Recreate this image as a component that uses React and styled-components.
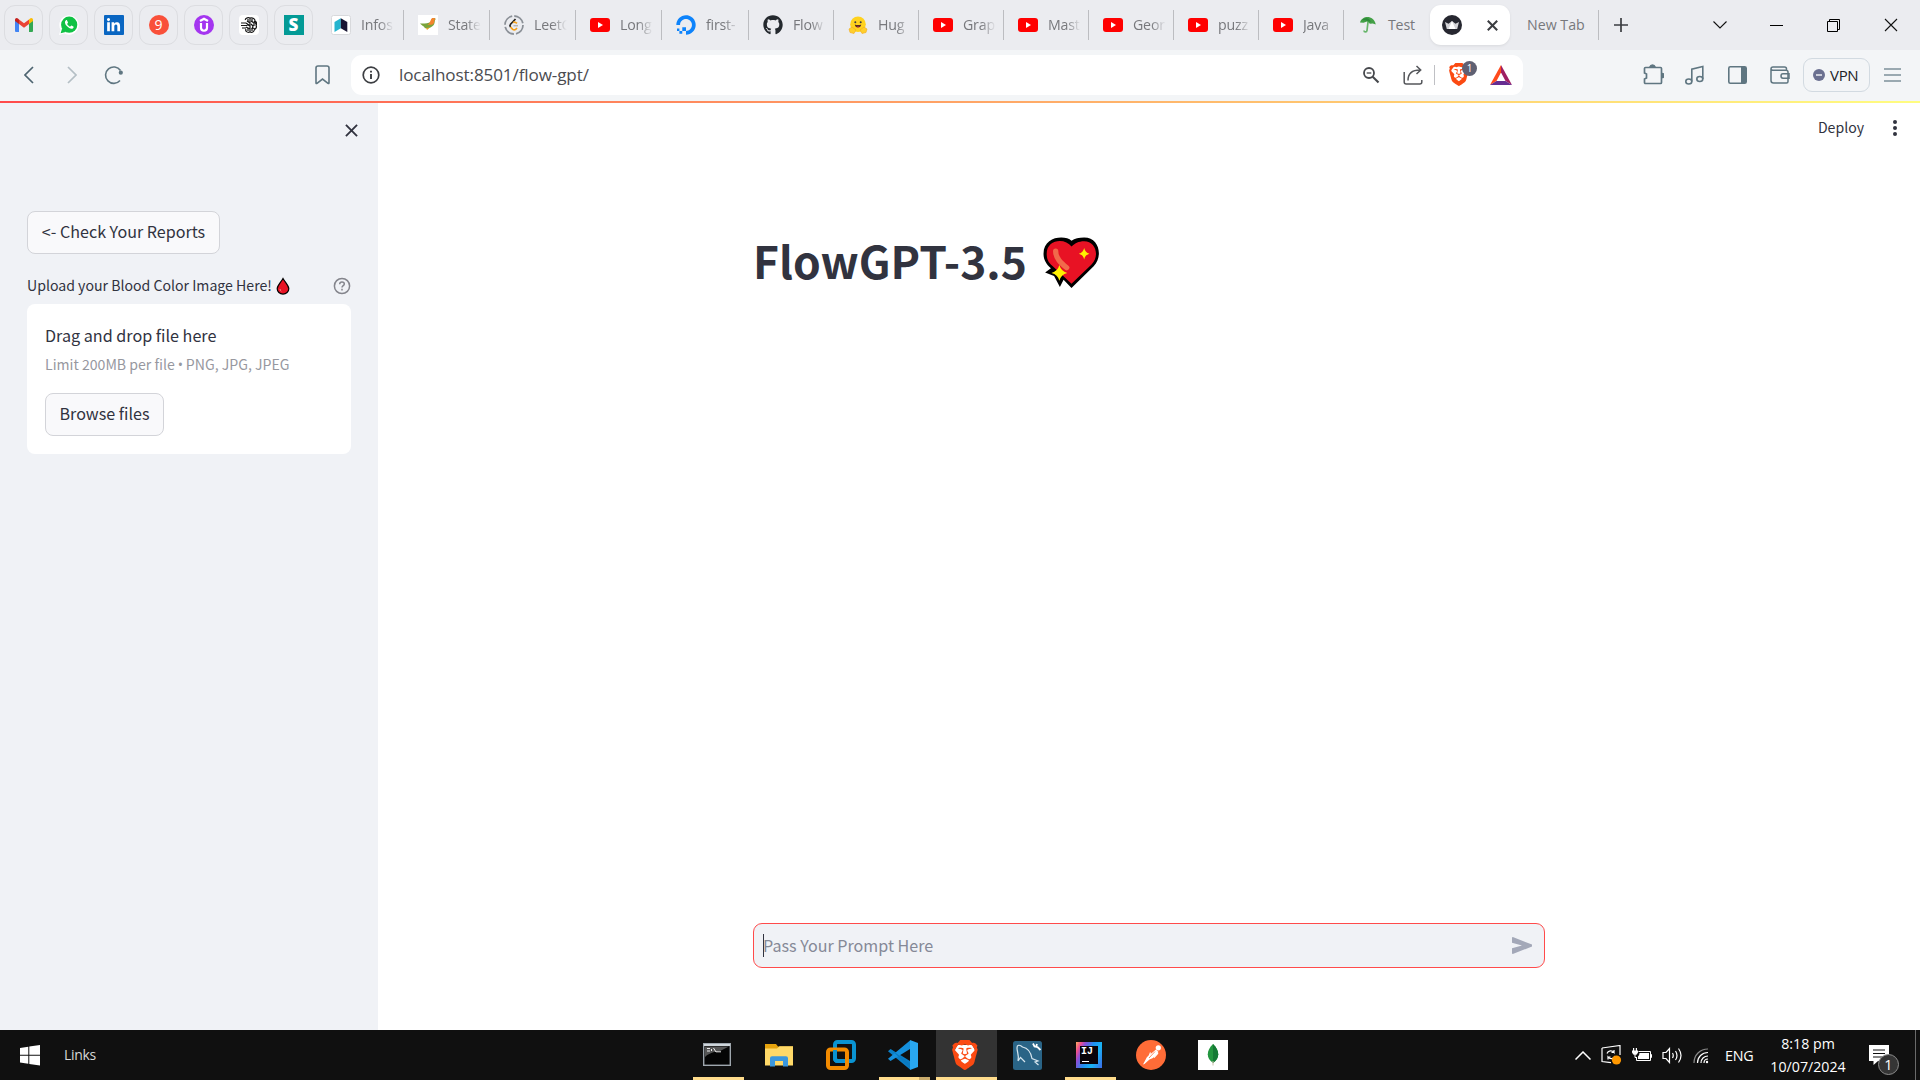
import React from "react";
import styled, { createGlobalStyle } from "styled-components";
import { FaLinkedinIn, FaGithub, FaDigitalOcean } from "react-icons/fa";
import { SiBrave } from "react-icons/si";

const UI = '"Open Sans", "Noto Sans", sans-serif';
const PAGE = '"Noto Sans CJK SC", "Noto Sans", sans-serif';

const GlobalStyle = createGlobalStyle`
  * { box-sizing: border-box; }
  body { margin: 0; overflow: hidden; background: #fff; }
  svg { display: block; flex: none; }
  button { font: inherit; margin: 0; padding: 0; border: 0; background: none; color: inherit; }
`;

const Screen = styled.div`
  width: 1920px;
  height: 1080px;
  display: flex;
  flex-direction: column;
  font-family: ${UI};
`;

/* ---------- tab strip ---------- */
const TabStrip = styled.header`
  height: 50px;
  flex: none;
  display: flex;
  align-items: center;
  background: #ebecf0;
`;
const PinnedTabs = styled.div`
  display: flex;
  gap: 6px;
  padding-left: 4px;
  margin-right: 4px;
`;
const PinnedTab = styled.div`
  width: 39px;
  height: 40px;
  border: 1px solid #dcdde1;
  border-radius: 11px;
  display: flex;
  align-items: center;
  justify-content: center;
`;
const Tab = styled.div`
  width: ${(p) => p.$width}px;
  height: 30px;
  flex: none;
  display: flex;
  align-items: center;
  gap: 10px;
  padding: 0 2px 0 14px;
  border-right: 1px solid ${(p) => (p.$last ? "transparent" : "#bcbdc1")};
`;
const TabTitle = styled.span`
  flex: 1;
  white-space: nowrap;
  font-size: 14.2px;
  line-height: 22px;
  letter-spacing: -0.2px;
  color: #77787c;
  padding-bottom: 1px;
  mask-image: ${(p) => (p.$whole ? "none" : "linear-gradient(90deg, #000 18px, transparent 33px)")};
`;
const ActiveTab = styled.div`
  width: 80px;
  height: 40px;
  border-radius: 11px;
  background: #fff;
  box-shadow: 0 1px 3px rgba(0, 0, 0, 0.08);
  display: flex;
  align-items: center;
  justify-content: space-between;
  padding: 0 12px;
`;
const NewTab = styled.div`
  width: 89px;
  height: 30px;
  border-right: 1px solid #bcbdc1;
  display: flex;
  align-items: center;
  padding: 0 0 1px 17px;
  font-size: 14.2px;
  color: #77787c;
  white-space: nowrap;
`;
const AddTab = styled.button`
  width: 44px;
  display: flex;
  justify-content: center;
`;
const WindowControls = styled.div`
  display: flex;
  margin-left: auto;
  width: 229px;
`;
const WindowButton = styled.button`
  width: 57px;
  height: 49px;
  display: flex;
  align-items: center;
  justify-content: center;
`;
const RoundBadge = styled.div`
  width: 20px;
  height: 20px;
  border-radius: ${(p) => p.$radius || "50%"};
  background: ${(p) => p.$bg};
  color: ${(p) => p.$color || "#fff"};
  display: flex;
  align-items: center;
  justify-content: center;
  font-family: ${UI};
  font-size: ${(p) => p.$size || 14}px;
  font-weight: ${(p) => p.$weight || 400};
  line-height: 20px;
`;

/* ---------- toolbar ---------- */
const Toolbar = styled.nav`
  height: 51px;
  flex: none;
  display: flex;
  align-items: center;
  background: #f3f5f7;
  color: #5f7681;
`;
const NavButtons = styled.div`
  display: flex;
  padding-left: 7px;
  width: 301px;
`;
const ToolSlot = styled.button`
  width: ${(p) => p.$width}px;
  height: 40px;
  display: flex;
  align-items: center;
  justify-content: center;
  && { padding-bottom: ${(p) => p.$lift || 0}px; }
`;
const AddressBar = styled.div`
  width: 1172px;
  height: 40px;
  margin: -2px 0 0 7px;
  border-radius: 11px;
  background: #fff;
  display: flex;
  align-items: center;
  color: #46484c;
`;
const Url = styled.span`
  flex: 1;
  padding: 1px 0 0 8px;
  font-size: 17.1px;
  line-height: 26px;
  letter-spacing: -0.12px;
  color: #4b4c50;
`;
const Divider = styled.i`
  width: 1px;
  height: 20px;
  background: #bfc0c4;
`;
const Shield = styled.div`
  position: relative;
  width: 43px;
  height: 40px;
  padding: 8px 0 0 14px;
`;
const ShieldCount = styled.span`
  position: absolute;
  left: 27px;
  top: 6px;
  width: 15px;
  height: 15px;
  border-radius: 50%;
  background: #5f6072;
  color: #fff;
  font-size: 10px;
  line-height: 15px;
  text-align: center;
`;
const Extensions = styled.div`
  display: flex;
  align-items: center;
  margin-left: 110px;
`;
const Vpn = styled.div`
  width: 67px;
  height: 34px;
  margin: -1px 0 0 2px;
  border: 1px solid #d2dae1;
  border-radius: 9px;
  display: flex;
  align-items: center;
  gap: 5px;
  padding-left: 9px;
  font-size: 15px;
  letter-spacing: -0.3px;
  color: #202126;
`;

/* ---------- page ---------- */
const GradientLine = styled.div`
  height: 2px;
  flex: none;
  background: linear-gradient(90deg, #ff4b4b, #fffd80);
`;
const Page = styled.div`
  flex: 1;
  display: flex;
  min-height: 0;
  font-family: ${PAGE};
  color: #31333f;
`;
const Sidebar = styled.aside`
  width: 378px;
  background: #f0f2f6;
  padding: 0 27px;
  display: flex;
  flex-direction: column;
  align-items: flex-start;
`;
const CloseRow = styled.div`
  width: 100%;
  height: 108px;
  flex: none;
  display: flex;
  justify-content: flex-end;
  padding: 21px 0 0;
  & > svg { margin-right: -7px; }
`;
const OutlineButton = styled.button`
  && {
    height: 43px;
    width: ${(p) => p.$width}px;
    flex: none;
    border: 1px solid #d3d4d9;
    border-radius: 8px;
    background: #f9f9fb;
    font-size: 16.1px;
    line-height: 24px;
    padding-bottom: 3px;
    white-space: nowrap;
  }
`;
const LabelRow = styled.div`
  width: 100%;
  height: 20px;
  margin: 22px 0 8px;
  display: flex;
  align-items: center;
  gap: 4px;
  & > svg:last-child { margin-left: auto; }
`;
const Label = styled.span`
  font-size: 14.12px;
  line-height: 20px;
  padding-bottom: 2px;
  white-space: nowrap;
`;
const DropZone = styled.section`
  width: 324px;
  height: 150px;
  border-radius: 8px;
  background: #fff;
  padding: 19px 18px 18px;
  display: flex;
  flex-direction: column;
  align-items: flex-start;
`;
const DropTitle = styled.span`
  font-size: 16.15px;
  line-height: 24px;
  white-space: nowrap;
`;
const DropHint = styled.small`
  margin: 7px 0 auto;
  font-size: 14.1px;
  line-height: 20px;
  height: 20px;
  color: #97989f;
  white-space: nowrap;
`;
const Bullet = styled.span`
  font-family: "Open Sans", sans-serif;
  letter-spacing: -0.5px;
  line-height: 1;
`;
const Main = styled.main`
  flex: 1;
  display: flex;
  flex-direction: column;
`;
const AppHeader = styled.div`
  height: 50px;
  display: flex;
  align-items: center;
  justify-content: flex-end;
  gap: 29px;
  padding-right: 23px;
  font-size: 14.1px;
`;
const DeployButton = styled.span`
  padding-bottom: 2px;
`;
const Content = styled.div`
  flex: 1;
  width: 792px;
  margin-left: 375px;
  display: flex;
  flex-direction: column;
  justify-content: space-between;
  padding: 74px 0 62px;
`;
const Heading = styled.h1`
  margin: 0;
  height: 68px;
  display: flex;
  align-items: flex-start;
  gap: 16px;
  font-size: 44.4px;
  line-height: 66px;
  font-weight: 700;
  white-space: nowrap;
  & > svg { margin-top: 10px; }
`;
const Prompt = styled.div`
  height: 45px;
  border: 1px solid #ff4b4b;
  border-radius: 9px;
  background: #f0f2f6;
  display: flex;
  align-items: center;
  padding: 0 12px 0 9px;
`;
const Caret = styled.i`
  width: 1px;
  height: 23px;
  background: #31333f;
`;
const Placeholder = styled.span`
  flex: 1;
  margin-left: -1px;
  padding-bottom: 2px;
  font-size: 16.1px;
  line-height: 24px;
  color: #858997;
`;

/* ---------- taskbar ---------- */
const Taskbar = styled.footer`
  height: 50px;
  flex: none;
  display: flex;
  background: #101010;
  color: #fff;
  align-items: center;
`;
const StartArea = styled.div`
  width: 688px;
  display: flex;
  align-items: center;
  gap: 23px;
  padding-left: 20px;
  font-size: 14px;
  letter-spacing: -0.3px;
  color: #d8d8d8;
`;
const StartLabel = styled.span`
  padding-bottom: 2px;
`;
const Apps = styled.div`
  display: flex;
  gap: 1px;
`;
const AppButton = styled.div`
  width: 61px;
  height: 50px;
  display: flex;
  flex-direction: column;
  align-items: center;
  background: ${(p) => (p.$active ? "#333" : "none")};
`;
const AppIcon = styled.div`
  flex: 1;
  display: flex;
  align-items: center;
  padding: 3px 3px 0 0;
`;
const Running = styled.div`
  height: 3px;
  width: ${(p) => (p.$full ? 61 : 51)}px;
  background: ${(p) =>
    !p.$on ? "transparent" : p.$stacked ? "linear-gradient(90deg, #ffdc8c 40px, #c9ab6c 40px)" : "#ffdc8c"};
`;
const IdeaTile = styled.div`
  width: 26px;
  height: 26px;
  padding: 4px;
  background: linear-gradient(115deg, #fdb060 0%, #f0508c 14%, #8c4fd8 26%, #1f8ff0 48%, #19b4f4 70%, #3d6be8 100%);
`;
const IdeaFace = styled.div`
  width: 18px;
  height: 18px;
  background: #08030a;
  color: #fff;
  font: 700 10px/11px "Liberation Mono", monospace;
  padding-left: 1px;
  &::after {
    content: "";
    display: block;
    width: 7px;
    height: 1px;
    margin: 4px 0 0 1px;
    background: #fff;
  }
`;
const MongoTile = styled.div`
  width: 30px;
  height: 30px;
  background: #fff;
  display: flex;
  align-items: center;
  justify-content: center;
`;
const Tray = styled.div`
  margin-left: auto;
  height: 50px;
  display: flex;
  align-items: center;
`;
const TrayIcons = styled.div`
  display: flex;
  align-items: center;
  gap: 10px;
`;
const Language = styled.span`
  width: 60px;
  padding-left: 16px;
  font-size: 14.3px;
  letter-spacing: -0.2px;
`;
const Clock = styled.div`
  width: 78px;
  text-align: center;
  font-size: 14.2px;
  line-height: 23px;
  white-space: nowrap;
  padding-bottom: 1px;
`;
const Notice = styled.div`
  position: relative;
  width: 58px;
  height: 50px;
  margin-left: 10px;
  padding: 15px 0 0 12px;
`;
const NoticeCount = styled.span`
  position: absolute;
  left: 21px;
  top: 24px;
  width: 21px;
  height: 21px;
  border: 1px solid #8c8c8c;
  border-radius: 50%;
  background: #353535;
  font-size: 14.5px;
  line-height: 19px;
  text-align: center;
`;
const ShowDesktop = styled.div`
  width: 5px;
  height: 50px;
  border-left: 1px solid #6a6a6a;
`;

/* ---------- drawings ---------- */
const Gmail = () => (
  <svg width="18" height="14" viewBox="0 0 18 14">
    <path d="M0 2.5V13a1 1 0 0 0 1 1h3V5z" fill="#4285f4" />
    <path d="M18 2.5V13a1 1 0 0 1-1 1h-3V5z" fill="#34a853" />
    <path d="M14 1.5V6l4-3V2c0-1.900-2-2.500-3.200-1.200z" fill="#fbbc04" />
    <path d="M4 6V1.500L9 5.300l5-3.800V6L9 9.800z" fill="#ea4335" />
    <path d="M0 2v1l4 3V1.500L3.200.8C2-.5 0 .1 0 2z" fill="#c5221f" />
  </svg>
);
const WhatsApp = () => (
  <svg width="20" height="20" viewBox="0 0 20 20">
    <path d="M0 20l1.500-5.300A9.700 9.700 0 1 1 5.300 18.500z" fill="#fff" />
    <circle cx="10.200" cy="9.700" r="8.100" fill="#0fc144" />
    <path d="M1.600 18.300l1.600-5 3.500 3.600z" fill="#0fc144" />
    <path d="M7 5.200c-1.700 1-1.300 3.600.8 5.900 2.200 2.400 4.900 3.300 6.200 2.100.8-.8.700-1.500.3-1.800l-1.700-.9c-.5-.2-.8.900-1.300 1.100-.8.200-3.100-2-3.100-2.700 0-.4.900-.7.800-1.300l-.9-2.100c-.2-.4-.7-.5-1.100-.3z" fill="#fff" />
  </svg>
);
const Udemy = () => (
  <svg width="20" height="20" viewBox="0 0 20 20">
    <circle cx="10" cy="10" r="10" fill="#a435f0" />
    <path d="M6 6L10 3.700 14 6M7 8v4.800c0 3.900 6 3.900 6 0V8" fill="none" stroke="#fff" strokeWidth="2.200" />
  </svg>
);
const Brain = () => (
  <svg width="16" height="16" viewBox="0 0 16 16" fill="none" stroke="#151515" strokeWidth="1.200">
    <path d="M9 1C6 0 4 2 4.500 3M9 1v14M0 6h5M0 8.500h6M1 11h4M9 15c-3 1-5-1-4-3M6 4l3 2M5 6l4 3M5 10l4 2" />
    <path d="M9 1c3-.5 5 1 5 3 2 1 2 3 1 4 1 2 0 4-1.500 4.500C13 15 11 16 9 15M10 4l3 2v3M10 7l2 2-1 3M13 4l2 3M12 11l2 1" />
    <path d="M7 2v3M7 7v2M7 11v3M11 2v3M11 11v3" />
  </svg>
);
const Infosys = () => (
  <svg width="20" height="20" viewBox="0 0 20 20">
    <rect x=".5" y=".5" width="19" height="19" rx="2" fill="#fff" stroke="#d8d9dc" />
    <path d="M3.500 7L9.800 3.200v10L3.500 17z" fill="#25b4cf" />
    <path d="M9.800 3.200L16.300 7v10l-6.500-3.800z" fill="#181533" />
  </svg>
);
const Bird = () => (
  <svg width="20" height="20" viewBox="0 0 20 20">
    <path d="M0 0h20v20H0z" fill="#fff" />
    <path d="M2 8.500c4 .4 8-.2 10.500-1.500 1-2 1-3.500 2.500-4 1.500-.3 2 .5 3 1-1.500.5-1 2-1.500 4-.8 4-6 6-10 5C7.500 12 4 11 2 8.500z" fill="#7aa43b" />
    <path d="M12 7c1-2 1-3.500 2.500-4 1.500-.3 2.500.5 3 1-1.500.5-1 2-1.500 4-2 3-5 1-8 2.500 2-.5 3-1.500 4-3.500z" fill="#f4842d" />
    <path d="M8 13l1 2 3-2.500z" fill="#e9a32b" />
  </svg>
);
const Leet = () => (
  <svg width="20" height="20" viewBox="0 0 20 20" fill="none">
    <circle cx="10" cy="10" r="9" stroke="#8b9097" strokeWidth="1.800" strokeDasharray="12 2.140" />
    <path d="M11.500 4L6.500 9.200c-.8 1-.8 1.800 0 2.800" stroke="#222" strokeWidth="1.700" />
    <path d="M6.500 12l2.200 2.300c1 .8 2 .8 3 0l1.300-1.300M9 7.500c1.500-1 2.500-.6 4 .8" stroke="#f4a01c" strokeWidth="1.700" />
    <path d="M9.500 10.700H14" stroke="#b5b5b5" strokeWidth="1.500" />
  </svg>
);
const YouTube = () => (
  <svg width="20" height="20" viewBox="0 0 20 20">
    <rect y="3" width="20" height="14" rx="3" fill="#f00" />
    <path d="M8 7l5 3-5 3z" fill="#fff" />
  </svg>
);
const Hug = () => (
  <svg width="20" height="20" viewBox="0 0 20 20">
    <circle cx="10" cy="9.200" r="7.800" fill="#ffd21e" />
    <path d="M1 14l3-2 4 3-2 3.500-4-1zM19 14l-3-2-4 3 2 3.500 4-1z" fill="#ffcf2c" stroke="#f2a91c" strokeWidth=".6" />
    <circle cx="7.300" cy="7.300" r="1" fill="#3a3b45" />
    <circle cx="12.700" cy="7.300" r="1" fill="#3a3b45" />
    <path d="M6.800 9.500c1.500.8 5 .8 6.400 0 0 4-6.400 4-6.400 0z" fill="#5a2a22" />
    <path d="M8.500 12q1.500-1 3 0-1.500 1-3 0z" fill="#ef4e4e" />
  </svg>
);
const Umbrella = () => (
  <svg width="20" height="20" viewBox="0 0 20 20">
    <path d="M2 7.500C4 .5 15.500-.5 17.800 9.500l-3-1-2.800.2-3-2.200-3.500 1.300z" fill="#43a047" />
    <path d="M4 5c3-3 7-3 9 2-3-1-6-2-9-2z" fill="#2e8b3a" />
    <path d="M10 7l-1 8.500c-.2 2-3 1.800-3 0" fill="none" stroke="#66b56a" strokeWidth="1.700" />
  </svg>
);
const Crown = () => (
  <svg width="20" height="20" viewBox="0 0 20 20">
    <circle cx="10" cy="10" r="10" fill="#262730" />
    <path d="M3 7l3.500 1.800L10 6l3.500 2.800L17 7l-1.800 7H4.800z" fill="#d4d4d8" />
    <path d="M10 6l3.500 8H6.500z" fill="#fff" />
  </svg>
);
const Cross = ({ size, width, color }) => (
  <svg width={size} height={size} viewBox="0 0 14 14" stroke={color} strokeWidth={width} fill="none">
    <path d="M1 1l12 12M13 1L1 13" />
  </svg>
);
const Chevron = ({ flip, color }) => (
  <svg width="10" height="18" viewBox="0 0 10 18" fill="none" stroke={color} strokeWidth="1.700">
    <path d={flip ? "M1 1l8 8-8 8" : "M9 1L1 9l8 8"} />
  </svg>
);
const Reload = () => (
  <svg width="20" height="20" viewBox="0 0 20 20" fill="none" stroke="#5f7681" strokeWidth="1.600">
    <path d="M16.500 5.500A8.200 8.200 0 1 0 16 15.500" />
    <circle cx="16.800" cy="7.700" r="2.100" fill="#5f7681" stroke="none" />
  </svg>
);
const Bookmark = () => (
  <svg width="15" height="20" viewBox="0 0 15 20" fill="none" stroke="#5f7681" strokeWidth="1.600">
    <path d="M1 3q0-2 2-2h9q2 0 2 2v14.800q0 1.200-1 .5l-5.500-4.200L2 18.300q-1 .7-1-.5z" />
  </svg>
);
const Info = () => (
  <svg width="18" height="18" viewBox="0 0 18 18" fill="none" stroke="#3c3e42" strokeWidth="1.700">
    <circle cx="9" cy="9" r="7.800" />
    <path d="M9 8v5M9 4.700v1.900" strokeWidth="1.900" />
  </svg>
);
const ZoomOut = () => (
  <svg width="18" height="18" viewBox="0 0 18 18" fill="none" stroke="#46484c" strokeWidth="1.800">
    <circle cx="7" cy="7" r="5" />
    <path d="M10.700 10.700L16.500 16.500" strokeWidth="2.100" />
    <path d="M4.700 7h4.600" strokeWidth="1.300" />
  </svg>
);
const Share = () => (
  <svg width="20" height="20" viewBox="0 0 20 20" fill="none" stroke="#55575b" strokeWidth="1.500">
    <path d="M1.200 7v10q0 2 2 2h13.600q2 0 2-2v-2" />
    <path d="M5 15.500C5 9 8.500 5 17 5M13.500 1l4.200 4-4.200 4" />
  </svg>
);
const BraveMark = ({ size }) => (
  <svg width={size * 0.86} height={size} viewBox="2 0 20 24">
    <path d="M6 4h12l2 4-3 10-5 4-5-4L4 8z" fill="#fff" />
    <SiBrave x="0" y="0" size="24" color="#fb4a12" />
  </svg>
);
const Bat = () => (
  <svg width="22" height="20" viewBox="0 0 22 20">
    <path d="M11 0L0 20l6.500-4L11 7.500z" fill="#ff4a1c" />
    <path d="M11 0l11 20-6.500-4L11 7.500z" fill="#9e1f63" />
    <path d="M0 20h22l-6.500-4h-9z" fill="#662d91" />
  </svg>
);
const Puzzle = () => (
  <svg width="21" height="21" viewBox="0 0 21 21" fill="none" stroke="#5f7681" strokeWidth="1.700">
    <path d="M1.500 4.500q0-1 1-1h15q1 0 1 1v14q0 1-1 1h-15q-1 0-1-1V15l2-1v-4l-2-1z" />
    <path d="M7 3a2.600 2.600 0 0 1 5 0zM19 9.500a2 2 0 0 1 0 4z" fill="#5f7681" />
  </svg>
);
const Music = () => (
  <svg width="20" height="20" viewBox="0 0 20 20" fill="none" stroke="#5f7681" strokeWidth="1.600">
    <ellipse cx="3.800" cy="16.500" rx="3" ry="2.500" />
    <ellipse cx="14.800" cy="14" rx="3" ry="2.500" />
    <path d="M6.800 16.500V4.200l11-2.700v12.500" />
  </svg>
);
const SidePanel = () => (
  <svg width="19" height="18" viewBox="0 0 19 18">
    <rect x=".8" y=".8" width="17.400" height="16.400" rx="1.500" fill="none" stroke="#5f7681" strokeWidth="1.600" />
    <path d="M13 1h5v16h-5z" fill="#5f7681" />
  </svg>
);
const Wallet = () => (
  <svg width="20" height="18" viewBox="0 0 20 18" fill="none" stroke="#5f7681" strokeWidth="1.500">
    <path d="M16.500 4V3q0-2-2-2H3Q1 1 1 3v11.500Q1 17 3.500 17h13q1.500 0 1.500-1.500V6q0-1.800-2-1.800H3Q1 4.200 1 3" />
    <path d="M19 7.800h-6q-2 0-2 2.200t2 2.200h6z" />
  </svg>
);
const Drop = () => (
  <svg width="14" height="18" viewBox="0 0 14 18">
    <path d="M7 1.500C4 6.500 1.200 8.500 1.200 11.800a5.800 5.300 0 0 0 11.600 0C12.800 8.500 10 6.500 7 1.500z" fill="#e81224" stroke="#000" strokeWidth="1.200" />
    <path d="M4 12c0 1 .6 2 1.300 2.300" stroke="#f28a8a" fill="none" />
  </svg>
);
const Help = () => (
  <svg width="18" height="18" viewBox="0 0 18 18" fill="none" stroke="#84858c" strokeWidth="1.500">
    <circle cx="9" cy="9" r="7.600" />
    <path d="M6.700 7.200c0-3 4.600-2.800 4.600-.2 0 1.700-2.300 1.700-2.300 3.500M9 11.700v1.700" />
  </svg>
);
const SparkHeart = () => (
  <svg width="57" height="51" viewBox="1 0 54 49" preserveAspectRatio="none">
    <path d="M28 3.500C22-2 1.500-1 1.500 16c0 6 2.500 10 7 14L3 34l8.500 3.500L17 48l3.500-7L28 49l21-21c9-9 5.500-27.500-9-27.500-5 0-9 1-12 3z" fill="#000" />
    <path d="M28 9.200C22 .5 4.500 2 4.500 16c0 6 2 8.500 5 11.500L28 45l19-18.500C55 18 51 4 40 4c-5.500 0-9 2-12 5.200z" fill="#e81224" />
    <path d="M13 13.500c0 7 5 11.500 10.500 16" stroke="#f16a4b" strokeWidth="5" strokeLinecap="round" fill="none" />
    <path d="M40 10.500q1 4.500 5 5.500-4 1-5 5.500-1-4.500-5-5.500 4-1 5-5.500zM16.500 27q1.500 6 7.500 7.500-6 1.500-7.500 7.500-1.500-6-7.500-7.500 6-1.500 7.500-7.500z" fill="#fff100" />
  </svg>
);
const Send = () => (
  <svg width="20" height="17" viewBox="0 0 20 17">
    <path d="M.8 0L20 7.500v2L.8 17Q0 17 0 16v-4.800L10 8.500 0 5.800V1Q0 0 .8 0z" fill="#a3a8b8" />
  </svg>
);
const WindowsLogo = () => (
  <svg width="21" height="21" viewBox="0 0 21 21" fill="#fff">
    <path d="M0 3l8.300-1.200v8H0zM9.300 1.600L20 0v9.800H9.300zM0 10.800h8.300v8L0 17.600zM9.300 10.800H20v9.700L9.300 19z" />
  </svg>
);
const Terminal = () => (
  <svg width="28" height="24" viewBox="0 0 28 24">
    <rect x=".7" y=".7" width="26.600" height="21.600" fill="#050505" stroke="#9ea6ad" strokeWidth="1.400" />
    <path d="M1 1h26v2H1z" fill="#cfd6db" />
    <path d="M2 3.500h24L17 8C8 9 4 12 2 14z" fill="#555" />
    <path d="M4 5.500h3M4 8h3M8.500 6v2M10.500 5l2.500 4M13 8.800h5" stroke="#eee" />
  </svg>
);
const Folder = () => (
  <svg width="28" height="24" viewBox="0 0 28 24">
    <path d="M0 22V1h11l2 2.500h15V22z" fill="#e6a30d" />
    <path d="M0 5.500h12l2.500-2.300H28V22.500H0z" fill="#ffd968" />
    <path d="M5 23.500v-8.300q0-2 2-2h14q2 0 2 2v8.300h-5v-5.500h-8v5.500z" fill="#3b97dd" />
  </svg>
);
const VmBoxes = () => (
  <svg width="30" height="30" viewBox="0 0 30 30" fill="none" strokeWidth="4">
    <rect x="9" y="2" width="19" height="19" rx="2.500" stroke="#0a93d2" />
    <rect x="2" y="9.500" width="19" height="18.500" rx="2.500" stroke="#f38b00" />
    <path d="M9 10v8q0 3 3 3h7" stroke="#0a93d2" />
  </svg>
);
const VsCode = () => (
  <svg width="30" height="30" viewBox="0 0 30 30">
    <path d="M2.500 9L0 11.300 22 29.500V21z" fill="#0b7fc7" />
    <path d="M2.500 21L0 18.700 22 .5V9z" fill="#1590dd" />
    <path d="M2.500 9l20 15v4.500z" fill="#0a79bf" />
    <path d="M22 0l8 3v24l-8 3z" fill="#29a8f2" />
  </svg>
);
const Workbench = () => (
  <svg width="29" height="29" viewBox="0 0 29 29">
    <rect width="29" height="29" rx="2.500" fill="#2a6486" />
    <path d="M5 20c1.500-5-1-9-1-13 0-3.500 3-3.500 5.500-1C15 7 18 12 19 17.500l6 2.500-3 1 3.500 3M5 20l2.500-3.500 4.500 4.500" fill="none" stroke="#d7e6ee" strokeWidth="1.200" />
    <path d="M20 2.500l1.500 3 3 .5 3 3M24 3l-1 3" stroke="#fff" strokeWidth="1.800" fill="none" />
  </svg>
);
const Leaf = () => (
  <svg width="12" height="22" viewBox="0 0 12 22">
    <path d="M6 0c7 7 7 14 0 19C-1 14-1 7 6 0z" fill="#23963f" />
    <path d="M6 0c7 7 7 14 0 19z" fill="#157a35" />
    <path d="M6 17v4.500" stroke="#c9c0a8" />
  </svg>
);
const PostmanIcon = () => (
  <svg width="30" height="30" viewBox="0 0 30 30">
    <circle cx="15" cy="15" r="15" fill="#ff6c37" />
    <circle cx="22.300" cy="7.800" r="2.600" fill="#fff" />
    <path d="M20 9.500l2.500 2.500-5.500 6-3.500 1.500-5 4.500-1.500.5 4-7.500 3-2.500z" fill="#fff" />
    <path d="M14.500 12.500l-1.500 4M22 13l-4 4.500" stroke="#fff" strokeWidth="1.200" />
    <path d="M19 11.500L13 18" stroke="#ff6c37" strokeWidth=".8" />
  </svg>
);
const TrayUp = () => (
  <svg width="16" height="9" viewBox="0 0 16 9" fill="none" stroke="#fff" strokeWidth="1.500">
    <path d="M.5 8.500L8 1l7.500 7.500" />
  </svg>
);
const Update = () => (
  <svg width="21" height="20" viewBox="0 0 21 20" fill="none" stroke="#fff" strokeWidth="1.200">
    <path d="M1 3l18-2.500V10M1 3v13.500l9 1.200" />
    <path d="M6 8.500c1-3 5-3.500 7-1V5M13 7.500h-2.500M14 11c-1 3-5 3.500-7 1v2.500M7 12h2.500" />
    <circle cx="15.500" cy="15" r="4.600" fill="#ff9800" stroke="none" />
  </svg>
);
const Battery = () => (
  <svg width="20" height="14" viewBox="0 0 20 14" fill="none" stroke="#fff" strokeWidth="1">
    <path d="M6.500 3.500h12v9h-14V9M3 7v2.500h1.500M18.500 6.500h1v3h-1" />
    <path d="M0 2.500h6v2Q5 7 3 7T0 4.500zM1 0h1.200v2.500H1zM3.800 0H5v2.500H3.800zM7.500 5H17v6H6V8.500q1.500-1.500 1.500-3.500z" fill="#fff" stroke="none" />
  </svg>
);
const Speaker = () => (
  <svg width="21" height="17" viewBox="0 0 21 17" fill="none" stroke="#fff" strokeWidth="1.200">
    <path d="M1 5.500h3l3.500-4v14L4 11.500H1zM10.500 6q1.500 2.500 0 5M13.500 4q3 4.500 0 9M16.500 1.500q5 7 0 14" />
  </svg>
);
const Wifi = () => (
  <svg width="16" height="17" viewBox="0 0 16 17" fill="none" stroke="#fff" strokeWidth="1.200">
    <path d="M1 16C1 8 7 2 15 2" stroke="#8a8a8a" />
    <path d="M4.500 16C4.500 10 9 5.500 15 5.500M8 16c0-4 3-7 7-7M11 16c0-2.500 1.500-4 4-4" />
    <circle cx="14" cy="15" r="1.200" fill="#fff" stroke="none" />
  </svg>
);
const Message = () => (
  <svg width="20" height="21" viewBox="0 0 20 21">
    <path d="M0 0h20v16H9l-4.500 4v-4H0z" fill="#fff" />
    <path d="M4 5h12M4 8.500h12M4 12h12" stroke="#101010" strokeWidth="1.200" />
  </svg>
);

const DigitalOcean = () => <FaDigitalOcean size={20} color="#0d83fb" />;
const GitHub = () => <FaGithub size={20} color="#24292e" />;

const TABS = [
  ["Infos", Infosys, 87],
  ["State", Bird, 86],
  ["LeetC", Leet, 86],
  ["Long", YouTube, 86],
  ["first-", DigitalOcean, 87],
  ["Flow", GitHub, 85],
  ["Hug", Hug, 85],
  ["Grap", YouTube, 85],
  ["Mast", YouTube, 85],
  ["Geor", YouTube, 85],
  ["puzz", YouTube, 85],
  ["Java", YouTube, 85],
  ["Test", Umbrella, 86],
];

const APPS = [
  { Icon: Terminal, on: true },
  { Icon: Folder },
  { Icon: VmBoxes },
  { Icon: VsCode, on: true, stacked: true },
  { Icon: () => <BraveMark size={30} />, on: true, active: true },
  { Icon: Workbench },
  { Icon: () => <IdeaTile><IdeaFace>IJ</IdeaFace></IdeaTile>, on: true },
  { Icon: PostmanIcon },
  { Icon: () => <MongoTile><Leaf /></MongoTile> },
];

export default function App() {
  return (
    <Screen>
      <GlobalStyle />
      <TabStrip>
        <PinnedTabs>
          <PinnedTab><Gmail /></PinnedTab>
          <PinnedTab><WhatsApp /></PinnedTab>
          <PinnedTab><RoundBadge $bg="#0a66c2" $radius="1px"><FaLinkedinIn size={15} /></RoundBadge></PinnedTab>
          <PinnedTab><RoundBadge $bg="#f9503a">9</RoundBadge></PinnedTab>
          <PinnedTab><Udemy /></PinnedTab>
          <PinnedTab><RoundBadge $bg="#fff" $radius="4px"><Brain /></RoundBadge></PinnedTab>
          <PinnedTab><RoundBadge $bg="#039a96" $radius="0" $weight={800} $size={17}>S</RoundBadge></PinnedTab>
        </PinnedTabs>
        {TABS.map(([title, Icon, width]) => (
          <Tab key={title} $width={width} $last={title === "Test"}>
            <Icon />
            <TabTitle $whole={title === "Test"}>{title}</TabTitle>
          </Tab>
        ))}
        <ActiveTab>
          <Crown />
          <Cross size={11} width={2.6} color="#3b3d41" />
        </ActiveTab>
        <NewTab>New Tab</NewTab>
        <AddTab>
          <svg width="14" height="14" viewBox="0 0 14 14" stroke="#3b3d41" strokeWidth="1.700"><path d="M7 0v14M0 7h14" /></svg>
        </AddTab>
        <WindowControls>
          <WindowButton>
            <svg width="14" height="8" viewBox="0 0 14 8" fill="none" stroke="#111" strokeWidth="1.100"><path d="M.5.5L7 7l6.500-6.500" /></svg>
          </WindowButton>
          <WindowButton>
            <svg width="13" height="1" viewBox="0 0 13 1"><path d="M0 0h13v1H0z" fill="#000" /></svg>
          </WindowButton>
          <WindowButton>
            <svg width="13" height="13" viewBox="0 0 13 13" fill="none" stroke="#000"><path d="M.5 2.500h10v10H.5zM2.500 2.500v-2h10v10h-2" /></svg>
          </WindowButton>
          <WindowButton><Cross size={14} width={1.1} color="#111" /></WindowButton>
        </WindowControls>
      </TabStrip>

      <Toolbar>
        <NavButtons>
          <ToolSlot $width={43} $lift={1}><Chevron color="#4d6470" /></ToolSlot>
          <ToolSlot $width={43} $lift={1}><Chevron flip color="#b4bfc5" /></ToolSlot>
          <ToolSlot $width={41} $lift={2}><Reload /></ToolSlot>
        </NavButtons>
        <ToolSlot $width={43} $lift={1}><Bookmark /></ToolSlot>
        <AddressBar>
          <ToolSlot $width={40}><Info /></ToolSlot>
          <Url>localhost:8501/flow-gpt/</Url>
          <ToolSlot $width={42}><ZoomOut /></ToolSlot>
          <ToolSlot $width={42}><Share /></ToolSlot>
          <Divider />
          <Shield>
            <BraveMark size={23} />
            <ShieldCount>1</ShieldCount>
          </Shield>
          <ToolSlot $width={45}><Bat /></ToolSlot>
        </AddressBar>
        <Extensions>
          <ToolSlot $width={41.5} $lift={2}><Puzzle /></ToolSlot>
          <ToolSlot $width={41.5} $lift={1}><Music /></ToolSlot>
          <ToolSlot $width={42} $lift={1}><SidePanel /></ToolSlot>
          <ToolSlot $width={43} $lift={1}><Wallet /></ToolSlot>
          <Vpn>
            <svg width="12" height="12" viewBox="0 0 12 12"><circle cx="6" cy="6" r="6" fill="#6b7090" /><path d="M3 6h6" stroke="#e6e8ee" strokeWidth="1.600" /></svg>
            VPN
          </Vpn>
          <ToolSlot $width={44} $lift={1}>
            <svg width="17" height="14" viewBox="0 0 17 14" stroke="#7d909a" strokeWidth="1.500"><path d="M0 1h17M0 7h17M0 13h17" /></svg>
          </ToolSlot>
        </Extensions>
      </Toolbar>

      <GradientLine />
      <Page>
        <Sidebar>
          <CloseRow><Cross size={13} width={2} color="#31333f" /></CloseRow>
          <OutlineButton $width={193}>&lt;- Check Your Reports</OutlineButton>
          <LabelRow>
            <Label>Upload your Blood Color Image Here!</Label>
            <Drop />
            <Help />
          </LabelRow>
          <DropZone>
            <DropTitle>Drag and drop file here</DropTitle>
            <DropHint>Limit 200MB per file <Bullet>•</Bullet> PNG, JPG, JPEG</DropHint>
            <OutlineButton $width={119}>Browse files</OutlineButton>
          </DropZone>
        </Sidebar>
        <Main>
          <AppHeader>
            <DeployButton>Deploy</DeployButton>
            <svg width="4" height="16" viewBox="0 0 4 16" fill="#31333f"><circle cx="2" cy="2" r="2" /><circle cx="2" cy="8" r="2" /><circle cx="2" cy="14" r="2" /></svg>
          </AppHeader>
          <Content>
            <Heading>FlowGPT-3.5 <SparkHeart /></Heading>
            <Prompt>
              <Caret />
              <Placeholder>Pass Your Prompt Here</Placeholder>
              <Send />
            </Prompt>
          </Content>
        </Main>
      </Page>

      <Taskbar>
        <StartArea><WindowsLogo /><StartLabel>Links</StartLabel></StartArea>
        <Apps>
          {APPS.map(({ Icon, on, active, stacked }, i) => (
            <AppButton key={i} $active={active}>
              <AppIcon><Icon /></AppIcon>
              <Running $on={on} $full={active} $stacked={stacked} />
            </AppButton>
          ))}
        </Apps>
        <Tray>
          <TrayIcons>
            <TrayUp /><Update /><Battery /><Speaker /><Wifi />
          </TrayIcons>
          <Language>ENG</Language>
          <Clock>8:18 pm<br />10/07/2024</Clock>
          <Notice>
            <Message />
            <NoticeCount>1</NoticeCount>
          </Notice>
          <ShowDesktop />
        </Tray>
      </Taskbar>
    </Screen>
  );
}
